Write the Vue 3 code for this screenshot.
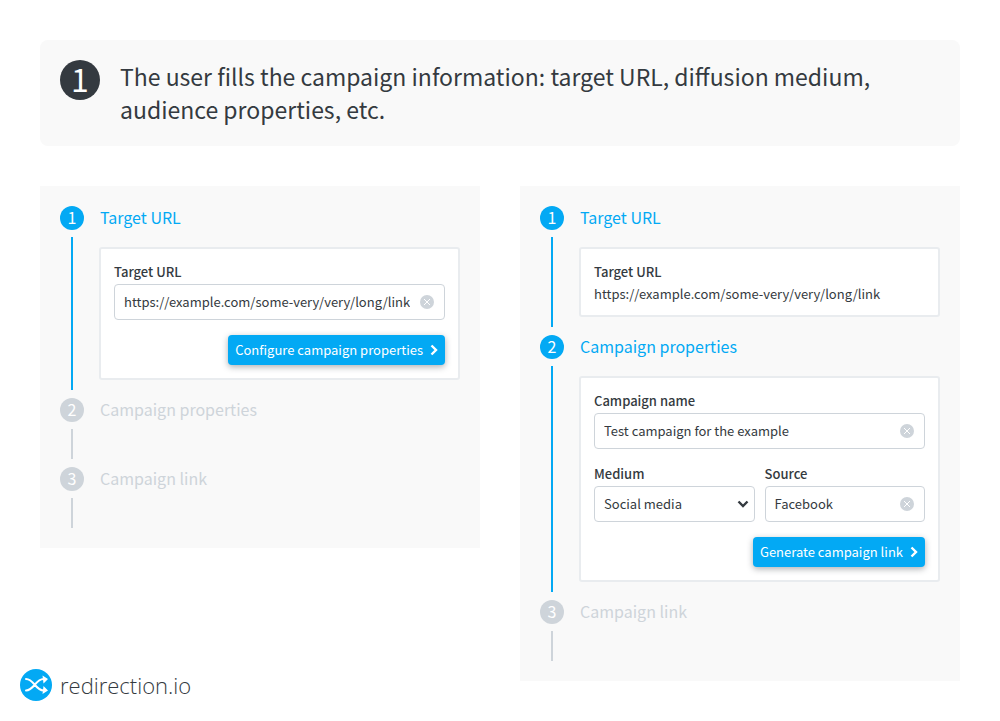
<script setup>
import { ref } from 'vue'

const targetUrl = ref('https://example.com/some-very/very/long/link')
const campaignName = ref('Test campaign for the example')
const medium = ref('Social media')
const source = ref('Facebook')
</script>

<template>
  <main class="page">
    <header class="intro">
      <span class="intro-number">1</span>
      <h1>The user fills the campaign information: target URL, diffusion medium, audience properties, etc.</h1>
    </header>

    <div class="columns">
      <div class="column column-left">
        <ol class="panel">
          <li class="step active">
            <div class="rail"><span class="badge">1</span><span class="line"></span></div>
            <div class="body">
              <h2>Target URL</h2>
              <form class="card" @submit.prevent>
                <div class="field">
                  <label for="target-url">Target URL</label>
                  <div class="control">
                    <input id="target-url" v-model="targetUrl" type="text" />
                    <button class="clear" type="button" aria-label="Clear target URL" @click="targetUrl = ''">
                      <svg viewBox="0 0 14 14"><circle cx="7" cy="7" r="7" /><path d="M4 4l6 6M10 4l-6 6" /></svg>
                    </button>
                  </div>
                </div>
                <button class="submit" type="submit">
                  Configure campaign properties
                  <svg viewBox="0 0 8 12"><path d="M1.500 1.500L6 6l-4.500 4.500" /></svg>
                </button>
              </form>
            </div>
          </li>
          <li class="step">
            <div class="rail"><span class="badge">2</span><span class="line"></span></div>
            <div class="body"><h2>Campaign properties</h2></div>
          </li>
          <li class="step">
            <div class="rail"><span class="badge">3</span><span class="line"></span></div>
            <div class="body"><h2>Campaign link</h2></div>
          </li>
        </ol>

        <a class="logo" href="#">
          <svg viewBox="0 0 32 32">
            <circle class="disc" cx="16" cy="16" r="16" />
            <path class="strand" d="M6 10C14 10 15.500 21.500 23.500 21.500M6 21.500C14 21.500 15.500 10 23.500 10" />
            <path class="tip" d="M22.500 6.500l5.500 3.500-4.500 4.500zM23.500 17l4.500 4.500-5.500 3.500z" />
          </svg>
          <span>redirection.io</span>
        </a>
      </div>

      <div class="column">
        <ol class="panel">
          <li class="step active">
            <div class="rail"><span class="badge">1</span><span class="line"></span></div>
            <div class="body">
              <h2>Target URL</h2>
              <dl class="card field">
                <dt>Target URL</dt>
                <dd>{{ targetUrl }}</dd>
              </dl>
            </div>
          </li>
          <li class="step active">
            <div class="rail"><span class="badge">2</span><span class="line"></span></div>
            <div class="body">
              <h2>Campaign properties</h2>
              <form class="card" @submit.prevent>
                <div class="field">
                  <label for="campaign-name">Campaign name</label>
                  <div class="control">
                    <input id="campaign-name" v-model="campaignName" type="text" />
                    <button class="clear" type="button" aria-label="Clear campaign name" @click="campaignName = ''">
                      <svg viewBox="0 0 14 14"><circle cx="7" cy="7" r="7" /><path d="M4 4l6 6M10 4l-6 6" /></svg>
                    </button>
                  </div>
                </div>
                <div class="pair">
                  <div class="field">
                    <label for="medium">Medium</label>
                    <div class="control">
                      <select id="medium" v-model="medium">
                        <option>Social media</option>
                      </select>
                      <svg class="caret" viewBox="0 0 12 8"><path d="M1.500 1.500L6 6l4.500-4.500" /></svg>
                    </div>
                  </div>
                  <div class="field">
                    <label for="source">Source</label>
                    <div class="control">
                      <input id="source" v-model="source" type="text" />
                      <button class="clear" type="button" aria-label="Clear source" @click="source = ''">
                        <svg viewBox="0 0 14 14"><circle cx="7" cy="7" r="7" /><path d="M4 4l6 6M10 4l-6 6" /></svg>
                      </button>
                    </div>
                  </div>
                </div>
                <button class="submit" type="submit">
                  Generate campaign link
                  <svg viewBox="0 0 8 12"><path d="M1.500 1.500L6 6l-4.500 4.500" /></svg>
                </button>
              </form>
            </div>
          </li>
          <li class="step">
            <div class="rail"><span class="badge">3</span><span class="line"></span></div>
            <div class="body"><h2>Campaign link</h2></div>
          </li>
        </ol>
      </div>
    </div>
  </main>
</template>

<style>
body {
  margin: 0;
  background: #fff;
}
</style>

<style scoped>
* {
  box-sizing: border-box;
}
.page {
  display: flex;
  flex-direction: column;
  gap: 40px;
  padding: 40px;
  color: #343a40;
  font: 13px/20px "Noto Sans CJK SC", "Noto Sans", sans-serif;
}
h1, h2, ol, dl, dd {
  margin: 0;
  font-weight: 400;
}
.intro {
  display: flex;
  gap: 20px;
  padding: 20px;
  border-radius: 8px;
  background: #f9f9f9;
}
.intro-number {
  flex: none;
  width: 40px;
  height: 40px;
  border-radius: 50%;
  background: #343a40;
  color: #fff;
  font-size: 32px;
  line-height: 36px;
  text-align: center;
}
h1 {
  font-size: 23px;
  line-height: 33px;
}
.columns {
  display: grid;
  grid-template-columns: 1fr 1fr;
  gap: 40px;
}
.column-left {
  display: flex;
  flex-direction: column;
  justify-content: space-between;
  gap: 40px;
  margin-bottom: -20px;
}
.panel {
  padding: 20px;
  background: #f9f9f9;
  list-style: none;
}
.step {
  display: flex;
  gap: 15px;
  color: #ced4da;
}
.step.active {
  color: #03a9f4;
}
.rail {
  display: flex;
  flex: none;
  flex-direction: column;
  align-items: center;
  gap: 7px;
  width: 24px;
  padding-bottom: 8px;
}
.step:last-child .rail {
  padding-bottom: 0;
}
.badge {
  width: 24px;
  height: 24px;
  border-radius: 50%;
  background: #ced4da;
  color: #fff;
  font-size: 16px;
  line-height: 22px;
  text-align: center;
}
.active .badge {
  background: #03a9f4;
}
.line {
  flex: 1;
  width: 2px;
  min-height: 30px;
  background: currentColor;
}
.body {
  flex: 1;
  min-width: 0;
}
h2 {
  padding-left: 1px;
  font-size: 16px;
  line-height: 22px;
}
.card {
  display: flex;
  flex-direction: column;
  gap: 15px;
  margin: 19px 0 18px;
  padding: 13px;
  border: 2px solid #e9ecef;
  border-radius: 3px;
  background: #fff;
  color: #343a40;
}
.field {
  display: flex;
  flex: 1;
  flex-direction: column;
  gap: 2px;
  min-width: 0;
}
dl.card {
  padding-bottom: 11px;
}
.pair {
  display: flex;
  gap: 10px;
}
label, dt {
  font-weight: 500;
}
.control {
  position: relative;
}
input, select {
  display: block;
  width: 100%;
  height: 36px;
  padding: 0 34px 0 9px;
  border: 1px solid #ced4da;
  border-radius: 4px;
  outline: none;
  background: #fff;
  color: inherit;
  font: inherit;
  appearance: none;
}
input {
  padding-bottom: 2px;
}
.clear {
  position: absolute;
  top: 11px;
  right: 11px;
  width: 14px;
  height: 14px;
  padding: 0;
  border: 0;
  background: none;
}
.clear svg {
  display: block;
  width: 14px;
  height: 14px;
  fill: #ced4da;
  stroke: none;
}
.clear path {
  stroke: #fff;
  stroke-width: 1;
}
.caret {
  position: absolute;
  top: 14px;
  right: 6px;
  width: 12px;
  height: 8px;
  fill: none;
  stroke: #343a40;
  stroke-width: 2.4;
  pointer-events: none;
}
.submit {
  display: flex;
  align-items: center;
  align-self: flex-end;
  gap: 7px;
  height: 30px;
  padding: 0 7px;
  border: 0;
  border-radius: 4px;
  background: #03a9f4;
  box-shadow: 0 2px 6px rgba(52, 58, 64, 0.4);
  color: #fff;
  font: inherit;
}
.submit svg {
  width: 8px;
  height: 12px;
  fill: none;
  stroke: #fff;
  stroke-width: 2.4;
}
.logo {
  display: flex;
  align-items: center;
  gap: 8px;
  margin-left: -20px;
  color: #343a40;
  font: 300 22px/32px "Open Sans", sans-serif;
  text-decoration: none;
}
.logo svg {
  width: 32px;
  height: 32px;
}
.disc {
  fill: #03a9f4;
}
.strand {
  fill: none;
  stroke: #fff;
  stroke-width: 2;
  stroke-linecap: round;
}
.tip {
  fill: #fff;
}
</style>
